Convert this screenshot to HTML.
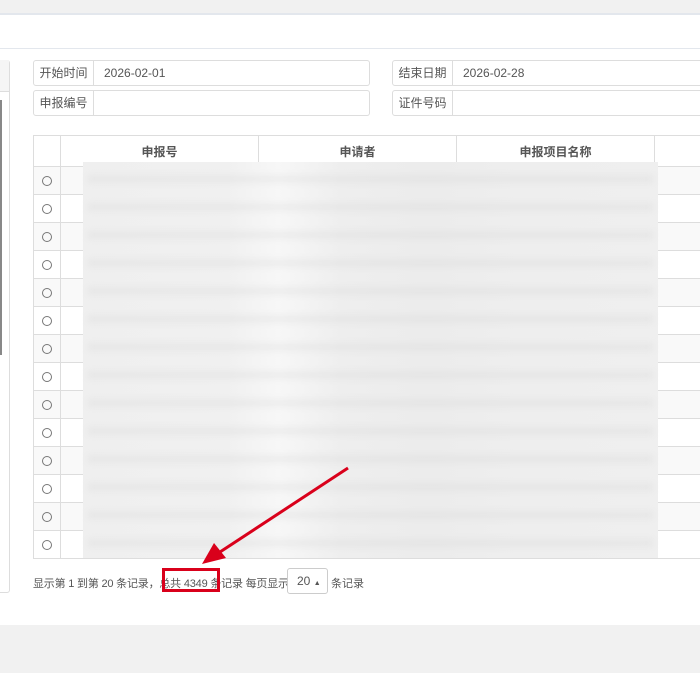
<!DOCTYPE html>
<html><head><meta charset="utf-8"><style>
*{margin:0;padding:0;box-sizing:border-box}
body{width:700px;height:673px;overflow:hidden;background:#f1f1f1;font-family:"Liberation Sans","Noto Sans CJK SC",sans-serif;font-size:12px;color:#555;position:relative}
.abs{position:absolute}
.lbl{position:absolute;background:#fff;border:1px solid #ddd;border-radius:3px 0 0 3px;text-align:center;line-height:24px;color:#555}
.inp{position:absolute;background:#fff;border:1px solid #ddd;border-left:none;border-radius:0 3px 3px 0;line-height:24px;padding-left:10px;color:#555}
table{position:absolute;left:33px;top:135px;border-collapse:collapse;width:680px;background:#fff}
td,th{border:1px solid #ddd;height:28px}
th{height:31px;font-weight:bold;color:#555;font-size:12px}
tr:nth-child(even) td{background:#f9f9f9}
.r{width:10px;height:10px;border:1px solid #777;border-radius:50%;margin:auto}
</style></head><body>
<div class="abs" style="left:0;top:0;width:700px;height:13px;background:#f1f1f1"></div>
<div class="abs" style="left:0;top:13px;width:700px;height:2px;background:#e3e7ed"></div>
<div class="abs" style="left:0;top:15px;width:700px;height:610px;background:#fff"></div>
<div class="abs" style="left:0;top:48px;width:700px;height:1px;background:#e3e7ed"></div>
<div class="abs" style="left:-5px;top:60px;width:15px;height:533px;border:1px solid #ddd;border-radius:3px;background:#fff"></div>
<div class="abs" style="left:-5px;top:60px;width:14px;height:32px;background:#f5f5f5;border-bottom:1px solid #ddd"></div>
<div class="abs" style="left:0;top:100px;width:2px;height:255px;background:#888"></div>

<div class="lbl" style="left:33px;top:60px;width:61px;height:26px">开始时间</div>
<div class="inp" style="left:94px;top:60px;width:276px;height:26px">2026-02-01</div>
<div class="lbl" style="left:33px;top:90px;width:61px;height:26px">申报编号</div>
<div class="inp" style="left:94px;top:90px;width:276px;height:26px"></div>
<div class="lbl" style="left:392px;top:60px;width:61px;height:26px">结束日期</div>
<div class="inp" style="left:453px;top:60px;width:260px;height:26px">2026-02-28</div>
<div class="lbl" style="left:392px;top:90px;width:61px;height:26px">证件号码</div>
<div class="inp" style="left:453px;top:90px;width:260px;height:26px"></div>

<table>
<tr><th style="width:27px"></th><th style="width:198px">申报号</th><th style="width:198px">申请者</th><th style="width:198px">申报项目名称</th><th></th></tr>
<tr><td><div class="r"></div></td><td></td><td></td><td></td><td></td></tr>
<tr><td><div class="r"></div></td><td></td><td></td><td></td><td></td></tr>
<tr><td><div class="r"></div></td><td></td><td></td><td></td><td></td></tr>
<tr><td><div class="r"></div></td><td></td><td></td><td></td><td></td></tr>
<tr><td><div class="r"></div></td><td></td><td></td><td></td><td></td></tr>
<tr><td><div class="r"></div></td><td></td><td></td><td></td><td></td></tr>
<tr><td><div class="r"></div></td><td></td><td></td><td></td><td></td></tr>
<tr><td><div class="r"></div></td><td></td><td></td><td></td><td></td></tr>
<tr><td><div class="r"></div></td><td></td><td></td><td></td><td></td></tr>
<tr><td><div class="r"></div></td><td></td><td></td><td></td><td></td></tr>
<tr><td><div class="r"></div></td><td></td><td></td><td></td><td></td></tr>
<tr><td><div class="r"></div></td><td></td><td></td><td></td><td></td></tr>
<tr><td><div class="r"></div></td><td></td><td></td><td></td><td></td></tr>
<tr><td><div class="r"></div></td><td></td><td></td><td></td><td></td></tr>
</table>
<div class="abs" style="left:83px;top:162px;width:575px;height:396px;background:linear-gradient(90deg,#efefef 0%,#f0f0f0 25%,#f7f7f7 34%,#eeeeee 45%,#ececec 60%,#eeeeee 75%,#efefef 100%)"></div>
<div class="abs" style="left:88px;top:166px;width:565px;height:388px;filter:blur(3px);background:repeating-linear-gradient(180deg,transparent 0 9px,rgba(210,210,210,0.25) 9px 17px,transparent 17px 28px)"></div>

<div class="abs" style="left:33px;top:575px;white-space:nowrap;color:#555;font-size:11px;letter-spacing:-0.2px">显示第 1 到第 20 条记录，总共 4349 条记录 每页显示</div>
<div class="abs" style="left:287px;top:568px;width:41px;height:26px;border:1px solid #ccc;border-radius:3px;background:#fff;line-height:24px;padding-left:9px;color:#555">20 <span style="font-size:7px">▲</span></div>
<div class="abs" style="left:331px;top:575px;color:#555;font-size:11px">条记录</div>
<div class="abs" style="left:162px;top:568px;width:58px;height:24px;border:3px solid #d9001b"></div>
<svg class="abs" style="left:0;top:0" width="700" height="673"><line x1="348" y1="468" x2="220" y2="552" stroke="#d9001b" stroke-width="3"/><polygon points="202,564 214,543 226,558" fill="#d9001b"/></svg>
</body></html>
